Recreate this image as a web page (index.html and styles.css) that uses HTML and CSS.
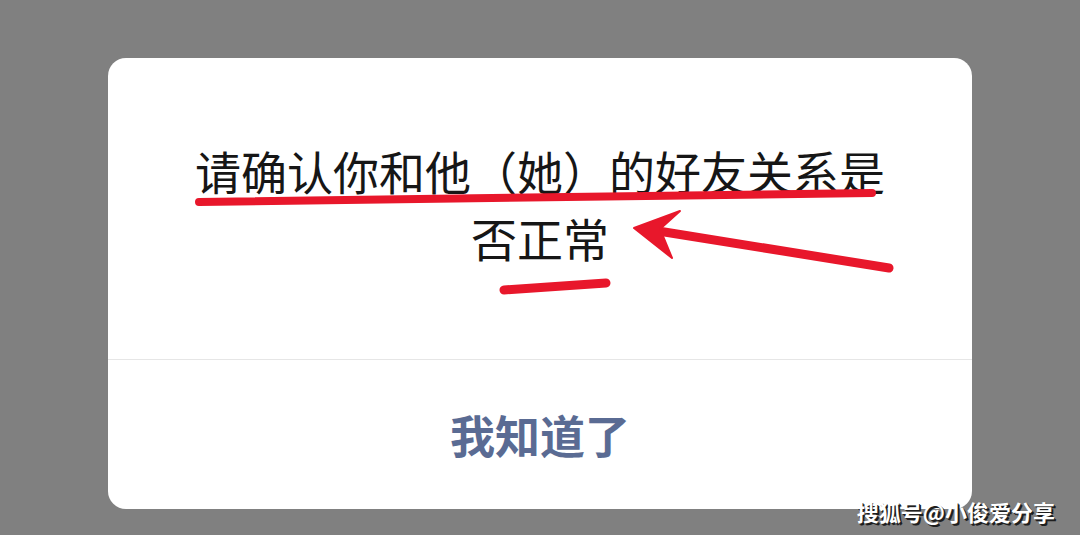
FILE: index.html
```html
<!DOCTYPE html>
<html lang="zh-CN">
<head>
<meta charset="utf-8">
<title>提示</title>
<link rel="stylesheet" href="styles.css">
</head>
<body>
<div class="screen">
  <div class="dialog">
    <div class="dialog-body">
      <p class="dialog-text">请确认你和他（她）的好友关系是否正常</p>
    </div>
    <div class="dialog-footer">
      <span class="dialog-btn">我知道了</span>
    </div>
  </div>
  <svg class="marks" width="1080" height="535" viewBox="0 0 1080 535" aria-hidden="true">
    <path d="M199 202 Q540 198 872 193" fill="none" stroke="#e8172b" stroke-width="8" stroke-linecap="round"/>
    <path d="M504 290 L606 283" fill="none" stroke="#e8172b" stroke-width="9" stroke-linecap="round"/>
    <path d="M889 268 L652 230" fill="none" stroke="#e8172b" stroke-width="9" stroke-linecap="round"/>
    <polygon points="634,228 680,211 660,229 672,258" fill="#e8172b" stroke="#e8172b" stroke-width="2" stroke-linejoin="round"/>
  </svg>
  <div class="watermark">搜狐号@小俊爱分享</div>
</div>
</body>
</html>
```

FILE: styles.css
```css
html, body {
  margin: 0;
  padding: 0;
}
body {
  background: #808080;
  font-family: "Noto Sans CJK SC", "Noto Sans", sans-serif;
}
.screen {
  position: relative;
  width: 1080px;
  height: 535px;
  overflow: hidden;
  padding-top: 58px;
  box-sizing: border-box;
}
.dialog {
  margin-left: 108px;
  width: 864px;
  height: 451px;
  background: #ffffff;
  border-radius: 18px;
  display: flex;
  flex-direction: column;
}
.dialog-body {
  height: 302px;
  box-sizing: border-box;
  display: flex;
  align-items: center;
  justify-content: center;
  padding: 0 80px 10px;
  border-bottom: 1px solid #e6e6e6;
}
.dialog-text {
  margin: 0;
  font-size: 46px;
  line-height: 67px;
  color: #161616;
  text-align: center;
  font-weight: 400;
}
.dialog-footer {
  flex: 1;
  display: flex;
  align-items: center;
  justify-content: center;
}
.dialog-btn {
  font-size: 45px;
  font-weight: 700;
  color: #5a6b93;
  line-height: 1;
}
.marks {
  position: absolute;
  left: 0;
  top: 0;
}
.watermark {
  position: absolute;
  right: 25px;
  top: 498px;
  font-size: 22px;
  line-height: 26px;
  font-weight: 700;
  color: #ffffff;
  text-shadow: 2px 2px 0 #1e1e1e, 1px 1px 0 #1e1e1e;
}
```
